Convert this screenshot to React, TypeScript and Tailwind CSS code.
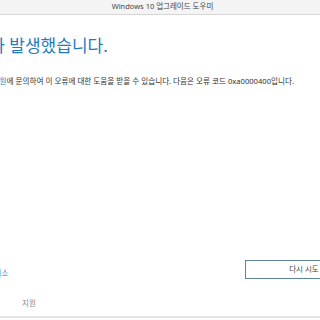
import React from "react";

const font = { fontFamily: '"Noto Sans", "Noto Sans CJK KR", sans-serif' };

export default function App() {
  return (
    <div
      className="w-[320px] h-[320px] overflow-hidden bg-white flex flex-col"
      style={font}
    >
      <div className="h-[15px] shrink-0 bg-[#f4f4f4] border-b border-[#d6d6d6] flex items-center justify-center">
        <span className="text-[7.5px] leading-none text-[#444] pl-[5px]">
          Windows 10 업그레이드 도우미
        </span>
      </div>

      <div className="flex flex-col ml-[-42px] w-[420px] shrink-0">
        <h1 className="mt-[22px] text-[17px] leading-[18px] text-[#2479c0] whitespace-nowrap font-normal">
          오류가 발생했습니다.
        </h1>
        <p className="mt-[21px] ml-[-1px] text-[7.6px] leading-[10px] text-[#333] whitespace-nowrap">
          <span className="text-[#2f86d0]">Microsoft 지원</span>에 문의하여 이 오류에 대한 도움을 받을 수 있습니다. 다음은 오류 코드 0xa0000400입니다.
        </p>
      </div>

      <div className="flex-1" />

      <div className="flex items-end justify-between shrink-0">
        <span className="ml-[-6px] text-[8px] leading-[10px] mb-[1px] text-[#3f8ccc] whitespace-nowrap">
          취소
        </span>
        <button className="w-[118px] h-[19px] mr-[-43px] border border-[#5f8396] bg-white text-[7.5px] text-[#444] flex items-center justify-center whitespace-nowrap">
          다시 시도
        </button>
      </div>

      <div className="mt-[19px] shrink-0 flex pl-[22px] text-[7.5px] leading-[10px] text-[#8a8a8a] pb-[8px] border-b-2 border-[#e4e4e4] mb-[2px]">
        <span>지원</span>
      </div>
    </div>
  );
}
